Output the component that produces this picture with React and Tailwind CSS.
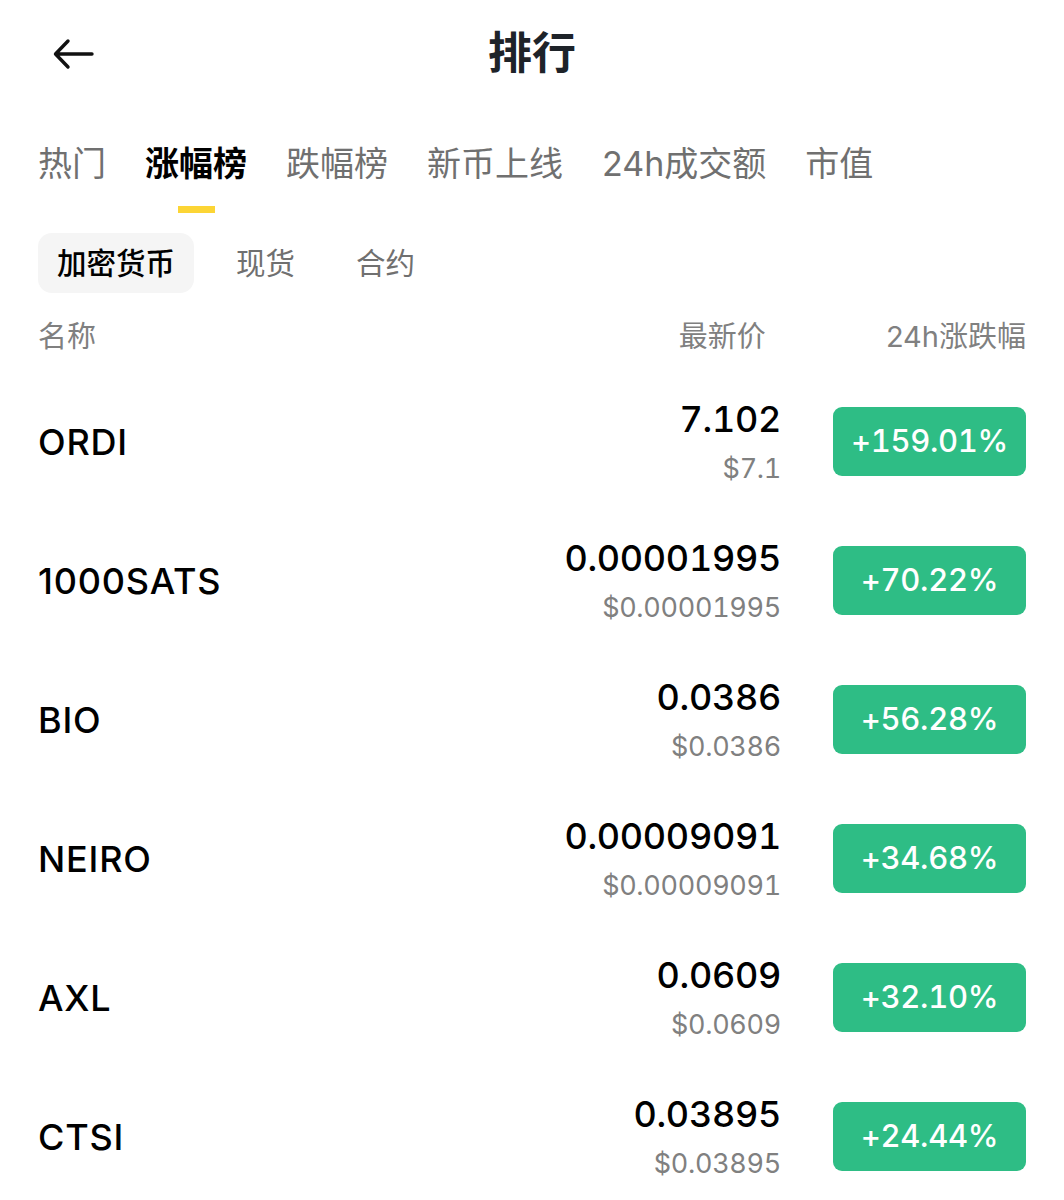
import { useState } from "react";

const tabs = ["热门", "涨幅榜", "跌幅榜", "新币上线", "24h成交额", "市值"];
const subTabs = ["加密货币", "现货", "合约"];

const coins = [
  { name: "ORDI", price: "7.102", usd: "$7.1", change: "+159.01%" },
  { name: "1000SATS", price: "0.00001995", usd: "$0.00001995", change: "+70.22%" },
  { name: "BIO", price: "0.0386", usd: "$0.0386", change: "+56.28%" },
  { name: "NEIRO", price: "0.00009091", usd: "$0.00009091", change: "+34.68%" },
  { name: "AXL", price: "0.0609", usd: "$0.0609", change: "+32.10%" },
  { name: "CTSI", price: "0.03895", usd: "$0.03895", change: "+24.44%" },
];

const BackArrow = () => (
  <svg width="42" height="32" viewBox="0 0 42 32" fill="none">
    <path d="M39 16H3M15 3L2.5 16L15 29" stroke="#111" strokeWidth="3.4" strokeLinecap="round" strokeLinejoin="round" />
  </svg>
);

const CoinRow = ({ coin }) => (
  <div className="h-[139px] flex items-center">
    <div className="flex-1 text-[36px] tracking-[0.8px] font-medium text-black">{coin.name}</div>
    <div className="flex flex-col items-end tabular-nums">
      <div className="text-[36px] leading-[40px] tracking-[-0.3px] font-medium text-black">{coin.price}</div>
      <div className="mt-[15px] text-[27px] leading-[30px] tracking-[-0.3px] text-[#808080]">{coin.usd}</div>
    </div>
    <div className="ml-[52px] w-[193px] h-[69px] rounded-[9px] bg-[#2ebd85] flex items-center justify-center text-white text-[31px] tracking-[-0.3px] font-medium tabular-nums">
      {coin.change}
    </div>
  </div>
);

export default function App() {
  const [active, setActive] = useState(1);
  const [sub, setSub] = useState(0);

  return (
    <div className="w-[1064px] min-h-[1200px] bg-white px-[38px] font-['Inter','Noto_Sans_CJK_SC',sans-serif] overflow-hidden">
      {/* Header */}
      <div className="h-[106px] grid grid-cols-3 items-center">
        <div className="pl-[15px] pt-[2px]">
          <BackArrow />
        </div>
        <div className="text-center text-[44px] font-bold text-[#1e2329]">排行</div>
        <div />
      </div>

      {/* Main tabs */}
      <div className="pt-[38px] flex gap-[39px]">
        {tabs.map((t, i) => (
          <button key={t} onClick={() => setActive(i)} className="flex flex-col items-center">
            <span
              className={
                "text-[34px] leading-[40px] whitespace-nowrap " +
                (i === active ? "font-bold text-black" : "text-[#707070]")
              }
            >
              {t}
            </span>
            <span className={"mt-[22px] w-[37px] h-[7px] " + (i === active ? "bg-[#fcd535]" : "bg-transparent")} />
          </button>
        ))}
      </div>

      {/* Sub tabs */}
      <div className="mt-[20px] flex items-center gap-[23px]">
        {subTabs.map((t, i) => (
          <button
            key={t}
            onClick={() => setSub(i)}
            className={
              "h-[60px] px-[19px] rounded-[14px] text-[29.5px] " +
              (i === sub ? "bg-[#f5f5f5] text-black font-medium" : "text-[#707070]")
            }
          >
            {t}
          </button>
        ))}
      </div>

      {/* Column header */}
      <div className="mt-[24px] h-[40px] flex items-center text-[29px] text-[#808080]">
        <div className="flex-1">名称</div>
        <div className="mr-[120px]">最新价</div>
        <div>24h涨跌幅</div>
      </div>

      {/* Rows */}
      <div className="mt-[15px]">
        {coins.map((c) => (
          <CoinRow key={c.name} coin={c} />
        ))}
      </div>
    </div>
  );
}
